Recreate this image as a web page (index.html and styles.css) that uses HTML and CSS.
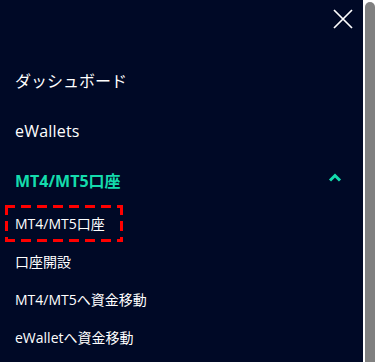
FILE: index.html
```html
<!DOCTYPE html>
<html lang="ja">
<head>
<meta charset="utf-8">
<link rel="stylesheet" href="styles.css">
</head>
<body>
<div class="screen">
  <nav class="menu">
    <div class="menu-head">
      <svg class="close" width="20" height="20" viewBox="0 0 20 20" aria-hidden="true">
        <path d="M1 1 L19 19 M19 1 L1 19" stroke="#ffffff" stroke-width="1.7" fill="none"/>
      </svg>
    </div>
    <div class="item item-first">ダッシュボード</div>
    <div class="item">eWallets</div>
    <div class="item item-open">
      <span>MT4/MT5口座</span>
      <svg class="chev" width="14" height="9" viewBox="0 0 14 9" aria-hidden="true">
        <path d="M2 7.5 L7 2.5 L12 7.5" stroke="#14dcad" stroke-width="3" fill="none"/>
      </svg>
    </div>
    <div class="sub sub-hl"><span class="hl-box">MT4/MT5口座</span></div>
    <div class="sub">口座開設</div>
    <div class="sub">MT4/MT5へ資金移動</div>
    <div class="sub">eWalletへ資金移動</div>
  </nav>
  <div class="scrollbar"><div class="thumb"></div></div>
</div>
</body>
</html>
```
FILE: styles.css
```css
html, body {
  margin: 0;
  padding: 0;
  background: #000926;
}
body {
  font-family: "Open Sans", "Noto Sans CJK JP", sans-serif;
  color: #ffffff;
}
.screen {
  display: flex;
  width: 375px;
  height: 362px;
  overflow: hidden;
}
.menu {
  flex: 0 0 363px;
  display: flex;
  flex-direction: column;
}
.menu-head {
  height: 53px;
  display: flex;
  justify-content: flex-end;
  align-items: flex-start;
}
.close {
  margin-top: 9px;
  margin-right: 10px;
}
.item {
  height: 49px;
  padding-left: 15px;
  padding-right: 21px;
  display: flex;
  align-items: center;
  justify-content: space-between;
  font-size: 16px;
  letter-spacing: 0.2px;
}
.item-first {
  height: 53px;
  letter-spacing: 0;
}
.item-open {
  color: #14dcad;
  font-weight: 700;
  letter-spacing: 0;
}
.chev {
  margin-top: -4px;
}
.sub {
  height: 38px;
  padding-left: 15px;
  display: flex;
  align-items: center;
  font-size: 14px;
}
.sub-hl {
  padding-left: 5px;
}
.hl-box {
  box-sizing: border-box;
  width: 118px;
  height: 37px;
  padding-left: 10px;
  display: flex;
  align-items: center;
  background:
    repeating-linear-gradient(90deg, #ff0000 0 10px, transparent 10px 16px) left top / 100% 3px no-repeat,
    repeating-linear-gradient(90deg, #ff0000 0 10px, transparent 10px 16px) left bottom / 100% 3px no-repeat,
    repeating-linear-gradient(180deg, #ff0000 0 10px, transparent 10px 16px) left top / 3px 100% no-repeat,
    repeating-linear-gradient(180deg, #ff0000 0 10px, transparent 10px 16px) right top / 3px 100% no-repeat;
}
.scrollbar {
  flex: 0 0 12px;
  background: #ffffff;
  display: flex;
  flex-direction: column;
}
.thumb {
  margin-top: 2px;
  margin-left: 2px;
  flex: 1;
  background: #808080;
  border-radius: 5px 5px 0 0;
}
```
